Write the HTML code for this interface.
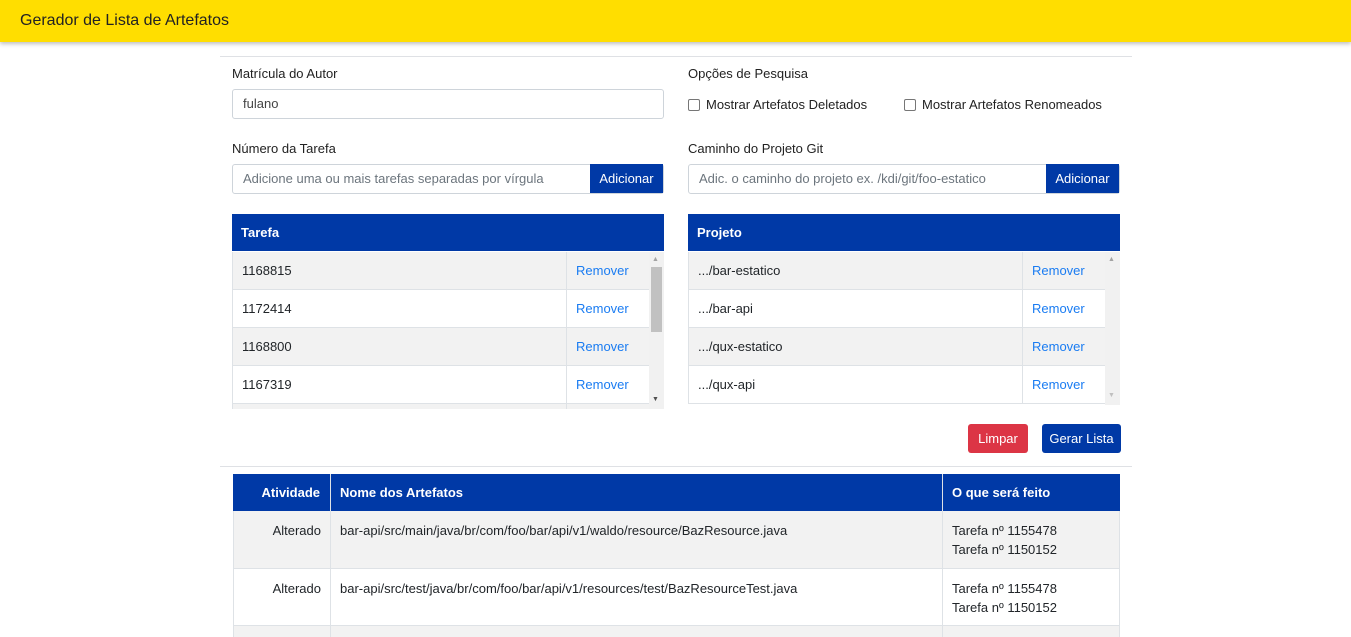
<!DOCTYPE html>
<html><head><meta charset="utf-8"><style>
*{box-sizing:border-box;margin:0;padding:0}
html,body{width:1351px;height:637px;overflow:hidden}
body{font-family:"Liberation Sans",sans-serif;font-size:13px;color:#212529;background:#fff;position:relative}
.top{position:absolute;left:0;top:0;width:1351px;height:42px;background:#ffde00;box-shadow:0 2px 4px rgba(0,0,0,.25)}
.top span{position:absolute;left:20px;top:12px;font-size:16px;color:#222}
.a{position:absolute}
.hr{position:absolute;left:220px;width:912px;height:1px;background:#dfe1e5}
.lbl{font-size:13px;color:#222}
.inp{border:1px solid #ced4da;border-radius:3px;height:30px;padding:0 10px;line-height:28px;color:#444}
.ph{color:#6c757d}
.btn{background:#0039a6;color:#fff;text-align:center;line-height:29px;height:29px}
.cb{display:inline-block;width:12px;height:12px;border:1px solid #767676;border-radius:2px;vertical-align:-2px;margin-right:6px;background:#fff}
.th{background:#0039a6;color:#fff;font-weight:bold;height:37px;line-height:37px;padding-left:9px}
.row{position:absolute;height:38px;line-height:38px;border-bottom:1px solid #dee2e6;border-left:1px solid #dee2e6}
.row .c1{position:absolute;left:9px}
.row .c2{position:absolute;top:0;height:38px;border-left:1px solid #dee2e6;color:#1a7cf2;padding-left:9px}
.g{background:#f2f2f2}
.sb{position:absolute;background:#f1f1f1;width:15px}
.cell{position:absolute;border-left:1px solid #dee2e6;border-bottom:1px solid #dee2e6;padding:10px 9px;line-height:19px}
</style></head><body>
<div class="top"><span>Gerador de Lista de Artefatos</span></div>
<div class="hr" style="top:56px"></div>
<div class="a lbl" style="left:232px;top:66px">Matrícula do Autor</div>
<div class="a inp" style="left:232px;top:89px;width:432px">fulano</div>
<div class="a lbl" style="left:232px;top:141px">Número da Tarefa</div>
<div class="a inp ph" style="left:232px;top:164px;width:432px">Adicione uma ou mais tarefas separadas por vírgula</div>
<div class="a btn" style="left:590px;top:164px;width:73px">Adicionar</div>

<div class="a lbl" style="left:688px;top:66px">Opções de Pesquisa</div>
<div class="a lbl" style="left:688px;top:97px"><span class="cb"></span>Mostrar Artefatos Deletados</div>
<div class="a lbl" style="left:904px;top:97px"><span class="cb"></span>Mostrar Artefatos Renomeados</div>
<div class="a lbl" style="left:688px;top:141px">Caminho do Projeto Git</div>
<div class="a inp ph" style="left:688px;top:164px;width:432px">Adic. o caminho do projeto ex. /kdi/git/foo-estatico</div>
<div class="a btn" style="left:1046px;top:164px;width:73px">Adicionar</div>

<div class="a th" style="left:232px;top:214px;width:432px">Tarefa</div>
<div class="row g" style="left:232px;top:252px;width:417px"><span class="c1">1168815</span><span class="c2" style="left:333px;width:84px">Remover</span></div>
<div class="row" style="left:232px;top:290px;width:417px"><span class="c1">1172414</span><span class="c2" style="left:333px;width:84px">Remover</span></div>
<div class="row g" style="left:232px;top:328px;width:417px"><span class="c1">1168800</span><span class="c2" style="left:333px;width:84px">Remover</span></div>
<div class="row" style="left:232px;top:366px;width:417px"><span class="c1">1167319</span><span class="c2" style="left:333px;width:84px">Remover</span></div>
<div class="row g" style="left:232px;top:404px;width:417px;height:5px;border-bottom:0"><span class="c2" style="left:333px;width:84px;height:5px"></span></div>
<div class="sb" style="left:649px;top:252px;height:157px"></div>
<div class="a" style="left:651px;top:267px;width:11px;height:65px;background:#c1c1c1"></div>
<div class="a" style="left:652px;top:256px;font-size:7px;color:#a3a3a3">▲</div>
<div class="a" style="left:652px;top:396px;font-size:7px;color:#505050">▼</div>

<div class="a th" style="left:688px;top:214px;width:432px">Projeto</div>
<div class="row g" style="left:688px;top:252px;width:417px"><span class="c1">.../bar-estatico</span><span class="c2" style="left:333px;width:84px">Remover</span></div>
<div class="row" style="left:688px;top:290px;width:417px"><span class="c1">.../bar-api</span><span class="c2" style="left:333px;width:84px">Remover</span></div>
<div class="row g" style="left:688px;top:328px;width:417px"><span class="c1">.../qux-estatico</span><span class="c2" style="left:333px;width:84px">Remover</span></div>
<div class="row" style="left:688px;top:366px;width:417px"><span class="c1">.../qux-api</span><span class="c2" style="left:333px;width:84px">Remover</span></div>
<div class="sb" style="left:1105px;top:252px;height:153px"></div>
<div class="a" style="left:1108px;top:256px;font-size:7px;color:#a3a3a3">▲</div>
<div class="a" style="left:1108px;top:392px;font-size:7px;color:#c0c0c0">▼</div>

<div class="a btn" style="left:968px;top:424px;width:60px;background:#dc3545;border-radius:3px">Limpar</div>
<div class="a btn" style="left:1042px;top:424px;width:79px;border-radius:3px">Gerar Lista</div>
<div class="hr" style="top:466px"></div>

<div class="a" style="left:233px;top:474px;width:887px;height:37px;background:#0039a6;color:#fff;font-weight:bold;line-height:37px">
<span class="a" style="right:800px">Atividade</span>
<div class="a" style="left:97px;top:0;width:1px;height:37px;background:#dee2e6"></div>
<span class="a" style="left:107px">Nome dos Artefatos</span>
<div class="a" style="left:709px;top:0;width:1px;height:37px;background:#dee2e6"></div>
<span class="a" style="left:719px">O que será feito</span>
</div>
<div class="a g" style="left:233px;top:511px;width:887px;height:58px"></div>
<div class="a g" style="left:233px;top:626px;width:887px;height:20px"></div>
<div class="cell" style="left:233px;top:511px;width:97px;height:58px;text-align:right">Alterado</div>
<div class="cell" style="left:330px;top:511px;width:612px;height:58px">bar-api/src/main/java/br/com/foo/bar/api/v1/waldo/resource/BazResource.java</div>
<div class="cell" style="left:942px;top:511px;width:178px;height:58px;border-right:1px solid #dee2e6">Tarefa nº 1155478<br>Tarefa nº 1150152</div>
<div class="cell" style="left:233px;top:569px;width:97px;height:57px;text-align:right">Alterado</div>
<div class="cell" style="left:330px;top:569px;width:612px;height:57px">bar-api/src/test/java/br/com/foo/bar/api/v1/resources/test/BazResourceTest.java</div>
<div class="cell" style="left:942px;top:569px;width:178px;height:57px;border-right:1px solid #dee2e6">Tarefa nº 1155478<br>Tarefa nº 1150152</div>
<div class="cell" style="left:233px;top:626px;width:97px;height:20px;border-bottom:0"></div>
<div class="cell" style="left:330px;top:626px;width:612px;height:20px;border-bottom:0"></div>
<div class="cell" style="left:942px;top:626px;width:178px;height:20px;border-bottom:0;border-right:1px solid #dee2e6"></div>
</body></html>
